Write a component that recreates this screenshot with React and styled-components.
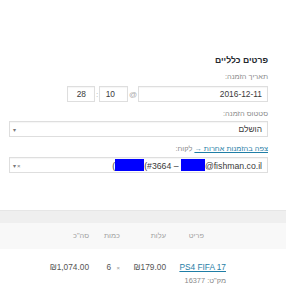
import React from "react";
import styled, { createGlobalStyle } from "styled-components";

const Global = createGlobalStyle`
  html, body { margin: 0; padding: 0; background: #fff; }
  body { font-family: "Liberation Sans", Arial, sans-serif; }
  * { box-sizing: border-box; }
`;

const Page = styled.div`
  width: 286px;
  height: 286px;
  overflow: hidden;
  background: #fff;
  direction: rtl;
`;

const Form = styled.div`
  padding: 55px 18px 0 9px;
  display: flex;
  flex-direction: column;
`;

const Heading = styled.h3`
  margin: 0;
  font-size: 8.6px;
  line-height: 11px;
  font-weight: bold;
  color: #23282d;
`;

const Label = styled.div`
  font-size: 7.4px;
  line-height: 10px;
  height: 10px;
  color: #8a8a8a;
  margin-top: ${(p) => p.$mt}px;
  display: flex;
  align-items: center;
  gap: 2px;
`;

const DateRow = styled.div`
  display: flex;
  align-items: center;
  height: 16px;
  margin-top: 4px;
`;

const Field = styled.div`
  width: ${(p) => (p.$w ? `${p.$w}px` : "auto")};
  flex: none;
  height: ${(p) => p.$h || 16}px;
  border: 1px solid #dedede;
  box-shadow: inset 0 1px 1px rgba(0, 0, 0, 0.04);
  background: #fff;
  display: flex;
  align-items: center;
  padding: 0 ${(p) => p.$pr || 5}px 0 3px;
  font-size: 8.4px;
  color: #3a3a3a;
  white-space: nowrap;
  overflow: hidden;
`;

const Sep = styled.span`
  width: ${(p) => p.$w}px;
  text-align: center;
  font-size: 8px;
  color: #aaa;
  flex: none;
`;

const SelectBox = styled(Field)`
  margin-top: ${(p) => p.$mt}px;
  width: 100%;
  justify-content: space-between;
`;

const Arrows = styled.span`
  font-size: 6px;
  color: #777;
  direction: ltr;
  letter-spacing: 1px;
`;

const CustomerText = styled.span`
  direction: ltr;
  unicode-bidi: embed;
  font-size: 8.7px;
  white-space: pre;
`;

const Redact = styled.span`
  display: inline-block;
  vertical-align: -2px;
  width: ${(p) => p.$w}px;
  height: 12px;
  background: #0000ff;
`;

const Link = styled.a`
  color: #1f7ea6;
  text-decoration: underline;
  cursor: pointer;
`;

const Table = styled.div`
  margin-top: 37px;
`;

const Band = styled.div`
  height: 13px;
  background: #efefef;
  border-top: 1px solid #e6e6e6;
`;

const Row = styled.div`
  display: grid;
  grid-template-columns: 60px 60px 46px 31px 1fr;
  align-items: ${(p) => (p.$head ? "center" : "start")};
  height: ${(p) => (p.$head ? "26px" : "auto")};
  background: ${(p) => (p.$head ? "#f8f8f8" : "#fff")};
  padding-top: ${(p) => (p.$head ? 0 : 13)}px;
  font-size: ${(p) => (p.$head ? 7.4 : 8.3)}px;
  color: ${(p) => (p.$head ? "#a0a0a0" : "#555")};
`;

const Cell = styled.div`
  text-align: right;
  padding-right: ${(p) => p.$pr || 0}px;
  line-height: 10px;
  white-space: nowrap;
`;

const Sku = styled.div`
  margin-top: 4px;
  font-size: 7.4px;
  color: #8a8a8a;
  line-height: 10px;
`;

const Times = styled.small`
  font-size: 6px;
  color: #999;
  margin-left: 3px;
`;

const Ltr = styled.span`
  direction: ltr;
  unicode-bidi: embed;
`;

export default function App() {
  return (
    <Page>
      <Global />
      <Form>
        <Heading>פרטים כלליים</Heading>
        <Label $mt={6}>תאריך הזמנה:</Label>
        <DateRow>
          <Field $w={130}>2016-12-11</Field>
          <Sep $w={10}>@</Sep>
          <Field $w={29} $pr={12}>10</Field>
          <Sep $w={4}>:</Sep>
          <Field $w={28} $pr={8}>28</Field>
        </DateRow>
        <Label $mt={7}>סטטוס הזמנה:</Label>
        <SelectBox $mt={2} $h={16}>
          <span>הושלם</span>
          <Arrows>▾</Arrows>
        </SelectBox>
        <Label $mt={7}>
          <Link>צפה בהזמנות אחרות →</Link>
          <span>לקוח:</span>
        </Label>
        <SelectBox $mt={3} $h={16}>
          <CustomerText>
            {"("}
            <Redact $w={29} />
            {"(#3664 – "}
            <Redact $w={24} />
            {"@fishman.co.il"}
          </CustomerText>
          <Arrows>▾×</Arrows>
        </SelectBox>
      </Form>
      <Table>
        <Band />
        <Row $head>
          <div />
          <Cell $pr={22}>פריט</Cell>
          <Cell>עלות</Cell>
          <Cell>כמות</Cell>
          <Cell>סה"כ</Cell>
        </Row>
        <Row>
          <div />
          <Cell>
            <Link>PS4 FIFA 17</Link>
            <Sku>מק"ט: 16377</Sku>
          </Cell>
          <Cell>
            <Ltr>₪179.00</Ltr>
          </Cell>
          <Cell>
            <Times>×</Times> 6
          </Cell>
          <Cell>
            <Ltr>₪1,074.00</Ltr>
          </Cell>
        </Row>
      </Table>
    </Page>
  );
}
